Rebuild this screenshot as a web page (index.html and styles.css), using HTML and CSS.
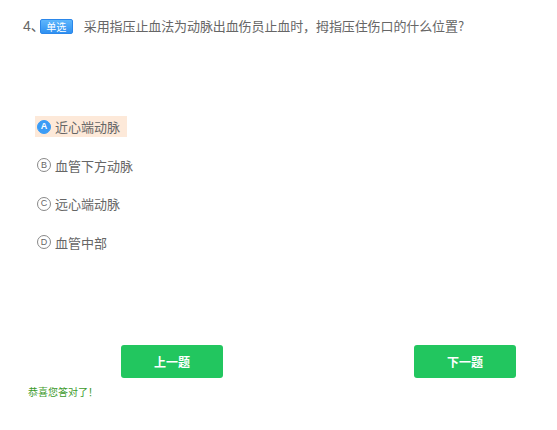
FILE: index.html
```html
<!DOCTYPE html>
<html lang="zh">
<head>
<meta charset="utf-8">
<link rel="stylesheet" href="styles.css">
</head>
<body>
<div class="page">
  <div class="question">
    <span class="num">4、</span>
    <span class="badge">单选</span>
    <span class="qtext">采用指压止血法为动脉出血伤员止血时，拇指压住伤口的什么位置?</span>
  </div>
  <ul class="options">
    <li class="option active"><span class="mark">A</span><span class="label">近心端动脉</span></li>
    <li class="option"><span class="mark">B</span><span class="label">血管下方动脉</span></li>
    <li class="option"><span class="mark">C</span><span class="label">远心端动脉</span></li>
    <li class="option"><span class="mark">D</span><span class="label">血管中部</span></li>
  </ul>
  <div class="actions">
    <button class="btn">上一题</button>
    <button class="btn">下一题</button>
  </div>
  <div class="result">恭喜您答对了！</div>
</div>
</body>
</html>
```
FILE: styles.css
```css
html, body {
  margin: 0;
  padding: 0;
  background: #fff;
}
body {
  font-family: "Noto Sans CJK SC", "Liberation Sans", sans-serif;
  color: #666;
}
.page {
  width: 557px;
  height: 430px;
  position: relative;
}
.question {
  display: flex;
  align-items: center;
  padding: 18px 0 0 23px;
  height: 16px;
  font-size: 13px;
  line-height: 16px;
}
.num {
  font-family: "Liberation Sans", "Noto Sans CJK SC", sans-serif;
  font-size: 14px;
  color: #666;
}
.badge {
  box-sizing: border-box;
  width: 33px;
  height: 15px;
  margin-left: -5px;
  border: 1px solid #2b87ea;
  border-radius: 2px;
  background: linear-gradient(#5db6fc, #3091f1);
  color: #fff;
  font-size: 10px;
  line-height: 13px;
  text-align: center;
}
.qtext {
  margin-left: 11px;
  color: #666;
  letter-spacing: -0.1px;
}
.options {
  list-style: none;
  margin: 82px 0 0 35px;
  padding: 0;
  display: flex;
  flex-direction: column;
  align-items: flex-start;
  row-gap: 17.5px;
}
.option {
  display: flex;
  align-items: center;
  height: 21px;
  padding: 0 7px 0 2px;
  font-size: 13px;
  color: #666;
}
.option.active {
  background: #fde9d9;
}
.mark {
  box-sizing: border-box;
  width: 14px;
  height: 14px;
  border: 1px solid #888;
  border-radius: 50%;
  display: flex;
  align-items: center;
  justify-content: center;
  font-family: "Liberation Sans", sans-serif;
  font-size: 9px;
  line-height: 9px;
  color: #666;
  margin-right: 4px;
}
.option.active .mark {
  border-color: #3b9cf6;
  background: #3b9cf6;
  color: #fff;
  font-weight: bold;
}
.actions {
  display: flex;
  justify-content: space-between;
  padding: 0 41px 0 121px;
  margin-top: 92px;
}
.btn {
  width: 102px;
  height: 33px;
  border: none;
  border-radius: 3px;
  background: #22c65f;
  color: #fff;
  font-family: "Noto Sans CJK SC", sans-serif;
  font-size: 12px;
  font-weight: bold;
  padding: 0;
}
.result {
  margin: 7px 0 0 28px;
  font-size: 10px;
  line-height: 14px;
  color: #3b9a2a;
}
```
